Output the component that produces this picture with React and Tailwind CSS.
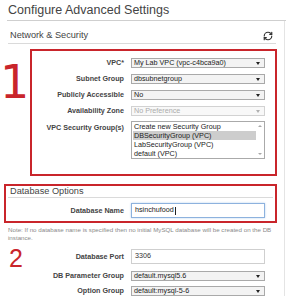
import { RefreshCw } from 'lucide-react'

const Label = ({ w, children, extra = '' }) => (
  <div className={`${w} ${extra} shrink-0 text-right text-[7.2px] font-bold leading-[10px] text-[#444]`}>
    {children}
  </div>
)

const Select = ({ value, disabled }) => (
  <div
    className={
      disabled
        ? 'relative h-[10px] w-[134px] border border-[#d2d2d2] bg-[#f8f8f8] pl-[2px] text-[7.2px] leading-[8px] text-[#ababab]'
        : 'relative h-[10px] w-[134px] border border-[#a9a9a9] bg-[#f3f3f3] pl-[2px] text-[7.2px] leading-[8px] text-[#222]'
    }
  >
    {value}
    <span
      className={
        disabled
          ? 'absolute right-[4px] top-[3px] h-0 w-0 border-x-[2px] border-t-[3px] border-x-transparent border-t-[#b0b0b0]'
          : 'absolute right-[4px] top-[3px] h-0 w-0 border-x-[2px] border-t-[3px] border-x-transparent border-t-[#222]'
      }
    />
  </div>
)

const groups = ['Create new Security Group', 'DBSecurityGroup (VPC)', 'LabSecurityGroup (VPC)', 'default (VPC)']

export default function App() {
  return (
    <div className="h-[300px] w-[286px] overflow-hidden bg-white font-['Liberation_Sans',Arial,sans-serif]">
      {/* title */}
      <div className="ml-[7px] h-[21px] border-b border-[#cfcfcf] pl-[1px] text-[12.5px] leading-[20px] text-[#444]">
        Configure Advanced Settings
      </div>

      <div className="w-[285px] border-r border-[#e4e4e4]">
        {/* network & security header */}
        <div className="mx-[8px] w-[268px] flex h-[23px] justify-between border-b border-[#dadada] pt-[9px]">
          <span className="pl-[2px] text-[9.2px] leading-[11px] text-[#444]">Network &amp; Security</span>
          <RefreshCw className="mr-[3px] mt-[1px]" size={10} strokeWidth={2.8} color="#333" />
        </div>

        {/* box 1 */}
        <div className="mt-[5px] flex">
          <div className="w-[30px] shrink-0">
            <div className="mt-[10px] font-['DejaVu_Sans',sans-serif] text-[46px] leading-none text-[#c9252b]">
              1
            </div>
          </div>
          <div className="flex w-[247px] flex-col gap-[6px] border-2 border-[#c9252b] pb-[15px] pt-[7px]">
            <div className="flex items-center">
              <Label w="w-[92px]">VPC*</Label>
              <div className="ml-[7px]">
                <Select value="My Lab VPC (vpc-c4bca9a0)" />
              </div>
            </div>
            <div className="flex items-center">
              <Label w="w-[92px]">Subnet Group</Label>
              <div className="ml-[7px]">
                <Select value="dbsubnetgroup" />
              </div>
            </div>
            <div className="flex items-center">
              <Label w="w-[92px]">Publicly Accessible</Label>
              <div className="ml-[7px]">
                <Select value="No" />
              </div>
            </div>
            <div className="flex items-center">
              <Label w="w-[92px]">Availability Zone</Label>
              <div className="ml-[7px]">
                <Select value="No Preference" disabled />
              </div>
            </div>
            <div className="-mt-[1px] flex items-start">
              <Label w="w-[92px]" extra="pt-[2px]">
                VPC Security Group(s)
              </Label>
              <div className="ml-[7px] flex h-[38px] w-[134px] border border-[#aaa] bg-white">
                <div className="flex-1 pl-[1px]">
                  {groups.map((g, i) => (
                    <div
                      key={g}
                      className={
                        i === 1
                          ? 'h-[9px] bg-[#cdcdcd] pl-[1px] text-[7.2px] leading-[9px] text-[#222]'
                          : 'h-[9px] pl-[1px] text-[7.2px] leading-[9px] text-[#222]'
                      }
                    >
                      {g}
                    </div>
                  ))}
                </div>
                <div className="flex w-[8px] flex-col items-center justify-between py-[3px]">
                  <span className="h-0 w-0 border-x-[2px] border-b-[2px] border-x-transparent border-b-[#a8a8a8]" />
                  <span className="h-0 w-0 border-x-[2px] border-t-[2px] border-x-transparent border-t-[#a8a8a8]" />
                </div>
              </div>
            </div>
          </div>
        </div>

        {/* box 2 */}
        <div className="ml-[4px] mt-[8px] w-[273px] border-2 border-[#c9252b] pb-[3px]">
          <div className="mx-[2px] h-[12px] border-b border-[#dadada] pl-[2px] text-[9.2px] leading-[10px] text-[#444]">
            Database Options
          </div>
          <div className="mt-[5px] flex items-center">
            <Label w="w-[118px]">Database Name</Label>
            <div className="ml-[7px] flex h-[15px] w-[134px] items-center border border-[#8db2de] bg-white pl-[3px] text-[7.2px] text-[#222] shadow-[0_0_2px_#b9d2ee]">
              hsinchufood
              <span className="ml-[1px] h-[8px] w-px bg-[#222]" />
            </div>
          </div>
        </div>

        {/* note */}
        <div className="ml-[8px] mt-[3px] w-[270px] text-[6.2px] leading-[8px] text-[#8a8a8a]">
          Note: If no database name is specified then no initial MySQL database will be created on the DB instance.
        </div>

        {/* rest */}
        <div className="relative">
          <span className="absolute left-[9px] top-[-3px] text-[25px] leading-none text-[#c9252b]">2</span>
          <div className="mt-[7px] flex items-center">
            <Label w="w-[124px]">Database Port</Label>
            <div className="ml-[7px] flex h-[15px] w-[134px] items-center border border-[#cfcfcf] bg-white pl-[3px] text-[7.2px] text-[#333]">
              3306
            </div>
          </div>
          <div className="mt-[7px] flex items-center">
            <Label w="w-[124px]">DB Parameter Group</Label>
            <div className="ml-[7px]">
              <Select value="default.mysql5.6" />
            </div>
          </div>
          <div className="mt-[5px] flex items-center">
            <Label w="w-[124px]">Option Group</Label>
            <div className="ml-[7px]">
              <Select value="default:mysql-5-6" />
            </div>
          </div>
        </div>
      </div>
    </div>
  )
}
